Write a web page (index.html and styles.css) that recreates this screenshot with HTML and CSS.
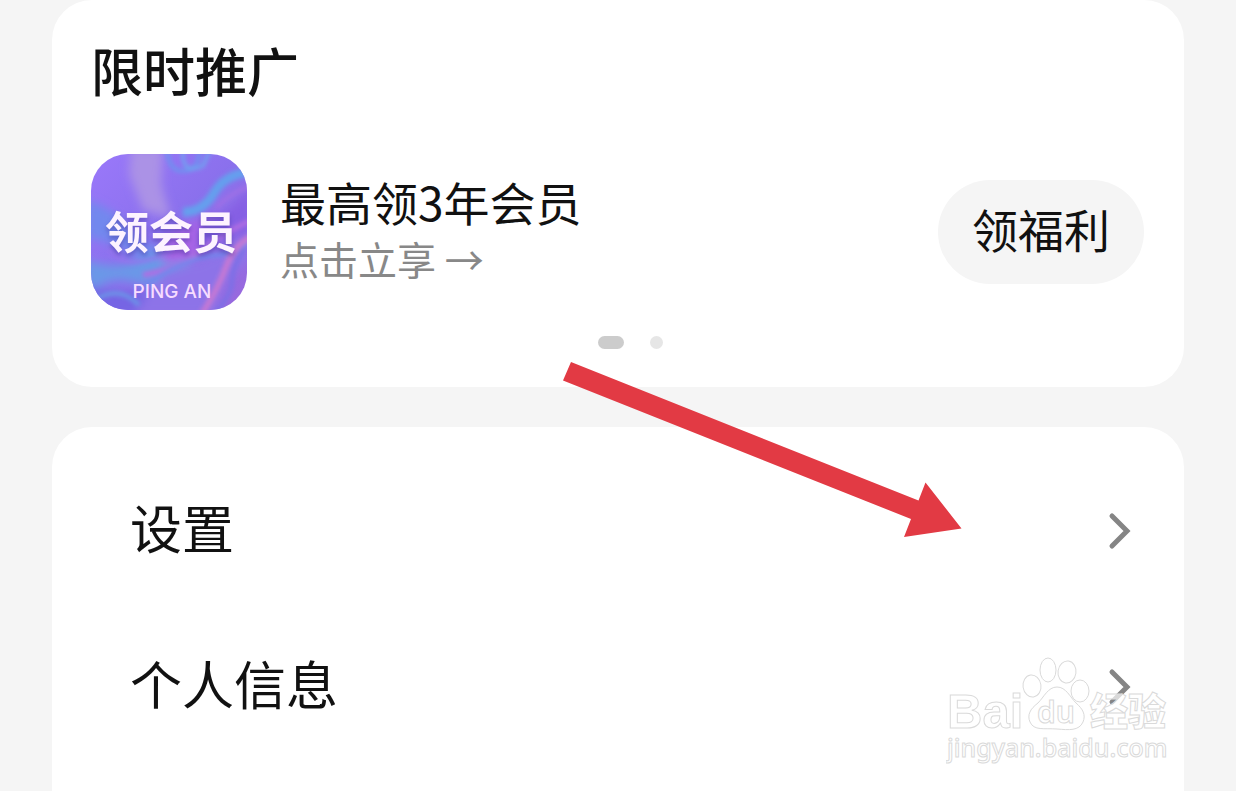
FILE: index.html
```html
<!DOCTYPE html>
<html lang="zh-CN">
<head>
<meta charset="utf-8">
<meta name="viewport" content="width=device-width, initial-scale=1">
<title>限时推广</title>
<link rel="stylesheet" href="styles.css">
</head>
<body>
<main class="page">
  <section class="card promo">
    <h1 class="promo-title">限时推广</h1>
    <div class="promo-row">
      <svg class="promo-icon" viewBox="0 0 156 156" role="img" aria-label="领会员 PING AN">
        <defs>
          <clipPath id="tile"><rect width="156" height="156" rx="37"/></clipPath>
          <linearGradient id="base" x1="0" y1="0" x2="1" y2="1">
            <stop offset="0" stop-color="#9a78fa"/>
            <stop offset=".5" stop-color="#8a70ec"/>
            <stop offset="1" stop-color="#9a68dc"/>
          </linearGradient>
          <filter id="soft" x="-30%" y="-30%" width="160%" height="160%"><feGaussianBlur stdDeviation="5"/></filter>
          <filter id="fine" x="-30%" y="-30%" width="160%" height="160%"><feGaussianBlur stdDeviation="2"/></filter>
        </defs>
        <g clip-path="url(#tile)">
          <rect width="156" height="156" fill="url(#base)"/>
          <g filter="url(#soft)">
            <path d="M40-5L72-5 70 30 80 64 52 56 38 20Z" fill="#ab92e6"/>
            <path d="M-5 46Q25 55 42 78T95 88L60 112Q20 85-5 84Z" fill="#7288ee"/>
            <path d="M-5 106Q30 120 62 98T100 112Q70 136 42 128T-5 146Z" fill="#6a98e8"/>
            <path d="M72 84Q105 60 145 62L116 92Q98 114 70 108Z" fill="#a964e6"/>
            <path d="M108 72Q138 62 160 32V78Q134 84 108 100Z" fill="#855fe4"/>
            <path d="M-5 132Q30 140 62 136L42 162H-5Z" fill="#7665e4"/>
            <path d="M158 82Q110 110 72 118L42 162H124Q130 118 158 108Z" fill="#8d73e8"/>
          </g>
          <g filter="url(#fine)" fill="none">
            <path d="M76-4Q78 18 93 17T108-2" stroke="#7090f0" stroke-width="4"/>
            <path d="M92-4Q90 22 112 12L119-4" stroke="#6ca9f0" stroke-width="3"/>
            <path d="M160 18Q134 20 123 39T92 58" stroke="#659fee" stroke-width="9"/>
            <path d="M160 32Q140 38 125 54" stroke="#9f70e6" stroke-width="4"/>
            <path d="M18 94Q28 112 53 107T82 91" stroke="#9774ed" stroke-width="3"/>
            <path d="M52 121Q86 115 106 99T158 67" stroke="#b06de3" stroke-width="5"/>
            <path d="M55 130Q92 104 126 101T160 75" stroke="#6f87ec" stroke-width="4"/>
            <path d="M160 83Q143 91 135 113T111 160" stroke="#c678d4" stroke-width="6"/>
            <path d="M153 95Q141 113 141 127T123 160" stroke="#7d6fe6" stroke-width="5"/>
            <path d="M-2 150Q26 128 48 151" stroke="#6b98e8" stroke-width="4"/>
          </g>
          <text class="tile-name" x="80" y="95" text-anchor="middle">领会员</text>
          <text class="tile-brand" x="81" y="144" text-anchor="middle">PING AN</text>
        </g>
      </svg>
      <div class="promo-copy">
        <h2 class="promo-name">最高领3年会员</h2>
        <p class="promo-note">点击立享 →</p>
      </div>
      <button class="promo-button" type="button">领福利</button>
    </div>
    <div class="dots"><span class="dot dot-active"></span><span class="dot"></span></div>
  </section>

  <nav class="card menu">
    <a class="menu-item" href="#settings">
      <span class="menu-label">设置</span>
      <svg class="chevron" viewBox="0 0 24 38" aria-hidden="true"><path d="M4 4L19 19 4 34"/></svg>
    </a>
    <a class="menu-item" href="#profile">
      <span class="menu-label">个人信息</span>
      <svg class="chevron" viewBox="0 0 24 38" aria-hidden="true"><path d="M4 4L19 19 4 34"/></svg>
    </a>
  </nav>

  <svg class="pointer" viewBox="0 0 400 176" aria-hidden="true">
    <path d="M8 0L355.500 138.500 362.500 120.500 398.500 166.500 341 175 348 157 0 18.500Z"/>
  </svg>

  <svg class="watermark" viewBox="0 0 224 112" role="img" aria-label="Baidu 经验 jingyan.baidu.com">
    <text class="mark-word" x="1" y="73">Bai</text>
    <g class="mark-paw">
      <ellipse cx="86" cy="31" rx="9" ry="11" transform="rotate(-8 86 31)"/>
      <ellipse cx="102" cy="15" rx="8" ry="12"/>
      <ellipse cx="121" cy="17" rx="9" ry="11" transform="rotate(8 121 17)"/>
      <ellipse cx="134" cy="36" rx="9" ry="11"/>
      <path d="M111 32C102 32 98 42 92 48C84 54 81 60 84 67C88 76 98 73 111 74C123 75 133 76 137 67C140 60 137 54 130 48C124 42 120 32 111 32Z"/>
    </g>
    <text class="mark-du" x="110" y="68" text-anchor="middle">du</text>
    <text class="mark-cn" x="144" y="70">经验</text>
    <text class="mark-url" x="1" y="102">jingyan.baidu.com</text>
  </svg>
</main>
</body>
</html>
```

FILE: styles.css
```css
* {
  box-sizing: border-box;
}

body {
  margin: 0;
  background: #f5f5f5;
  color: #111;
  font-family: "Noto Sans CJK SC", sans-serif;
}

.page {
  position: relative;
  display: flex;
  flex-direction: column;
  gap: 40px;
  min-height: 100vh;
  padding: 0 52px;
  overflow: hidden;
}

.card {
  background: #fff;
  border-radius: 40px;
}

.promo {
  padding: 38px 40px 38px 39px;
}

.promo-title {
  margin: 0 0 52px;
  font-size: 52px;
  font-weight: 500;
  line-height: 64px;
}

.promo-row {
  display: flex;
  align-items: center;
}

.promo-icon {
  flex: none;
  width: 156px;
  height: 156px;
}

.tile-name {
  font-size: 44px;
  font-weight: 700;
  fill: #fdf3ff;
  filter: drop-shadow(0 3px 2px rgba(70, 55, 160, 0.5));
}

.tile-brand {
  font-family: Inter, sans-serif;
  font-size: 19px;
  font-weight: 500;
  fill: #f7dcff;
}

.promo-copy {
  flex: 1;
  padding: 0 0 8px 33px;
}

.promo-name {
  margin: 0;
  font-size: 46px;
  font-weight: 400;
  line-height: 60px;
}

.promo-note {
  margin: 0;
  color: #888;
  font-size: 39px;
  line-height: 54px;
}

.promo-button {
  height: 104px;
  padding: 0 34px 8px;
  border: 0;
  border-radius: 52px;
  background: #f5f5f5;
  color: #111;
  font: inherit;
  font-size: 46px;
}

.dots {
  display: flex;
  justify-content: center;
  gap: 26px;
  margin-top: 26px;
  padding-left: 25px;
}

.dot {
  width: 13px;
  height: 13px;
  border-radius: 7px;
  background: #e6e6e6;
}

.dot-active {
  width: 26px;
  background: #ccc;
}

.menu {
  flex: 1;
  padding: 26px 52px 0 78px;
  border-radius: 40px 40px 0 0;
}

.menu-item {
  display: flex;
  align-items: center;
  justify-content: space-between;
  height: 156px;
  color: inherit;
  font-size: 52px;
  text-decoration: none;
}

.menu-label {
  padding-bottom: 10px;
}

.chevron {
  width: 24px;
  height: 38px;
  fill: none;
  stroke: #858585;
  stroke-width: 5px;
  stroke-linecap: round;
}

.pointer {
  position: absolute;
  top: 362px;
  left: 563px;
  width: 400px;
  height: 176px;
  fill: #e23a44;
  pointer-events: none;
}

.watermark {
  position: absolute;
  right: 66px;
  bottom: 24px;
  width: 224px;
  height: 112px;
  fill: #fff;
  fill-opacity: 0.7;
  stroke: #dadada;
  stroke-width: 1px;
  pointer-events: none;
}

.mark-word {
  font-family: "Liberation Sans", sans-serif;
  font-size: 49px;
  font-weight: 700;
}

.mark-du {
  font-family: "Noto Sans", sans-serif;
  font-size: 30px;
  font-weight: 600;
}

.mark-cn {
  font-size: 38px;
  font-weight: 900;
}

.mark-url {
  font-family: "Noto Sans", sans-serif;
  font-size: 25px;
  font-weight: 500;
}
```
